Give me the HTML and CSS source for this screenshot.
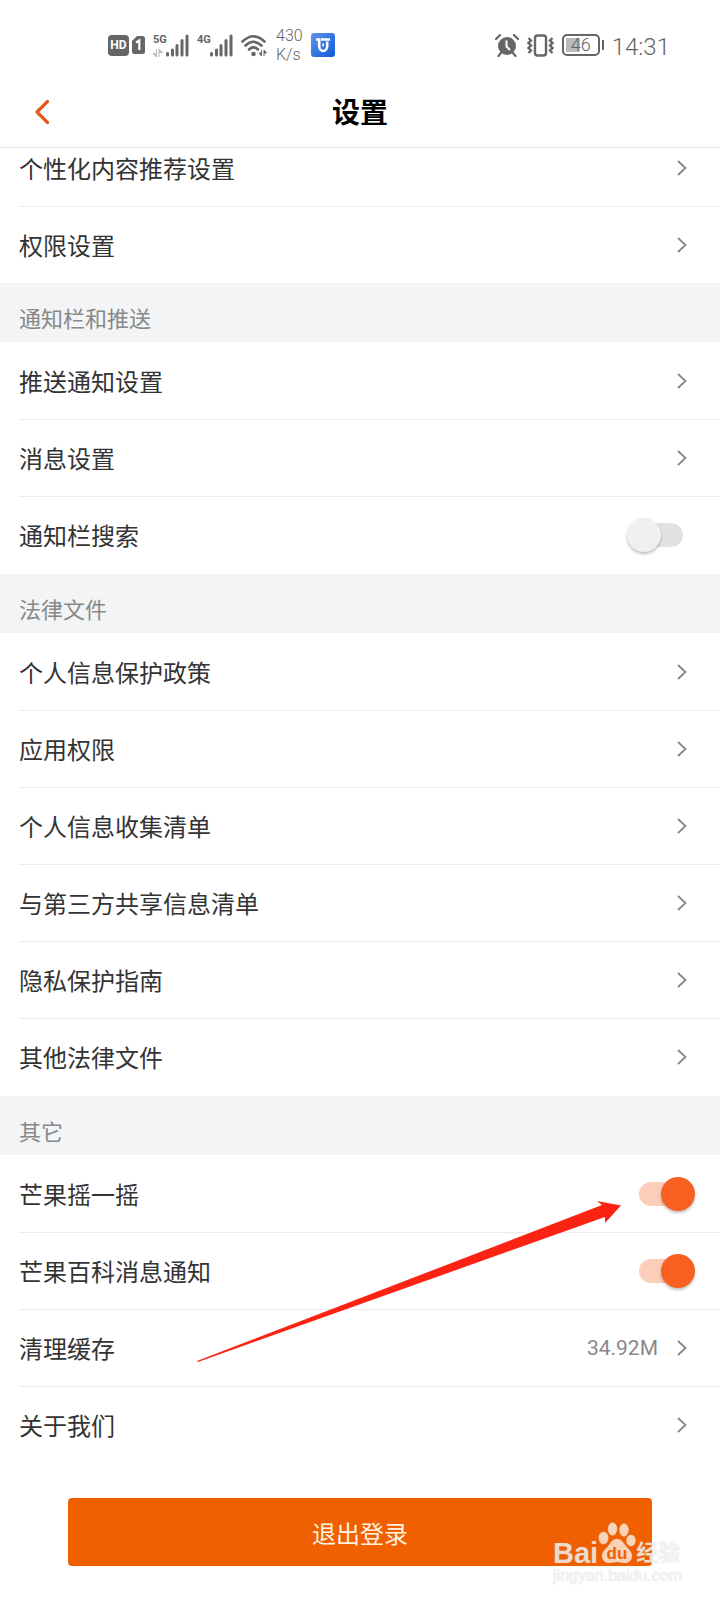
FILE: index.html
```
<!DOCTYPE html>
<html lang="zh-CN">
<head>
    <meta charset="UTF-8">
    <meta name="viewport" content="width=device-width, initial-scale=1.0">
    <title>设置</title>
    <link rel="stylesheet" href="styles.css">
</head>
<body>

    <svg width="0" height="0" class="defs">
        <symbol id="chevron" viewBox="0 0 10 16">
            <path d="M1 1l7.5 7L1 15" fill="none" stroke="currentColor" stroke-width="1.8"/>
        </symbol>
        <symbol id="bars" viewBox="0 0 24 23">
            <path d="M2.5 19.5v1.500M7.500 16v5M12 11.500v9.500M17 6.500v14.500M22 2v19" stroke="currentColor" stroke-width="3" stroke-linecap="round"/>
        </symbol>
    </svg>

    <div class="status">
        <div class="status-left">
            <span class="hd">HD</span>
            <svg class="sim" width="13" height="18" viewBox="0 0 13 18">
                <path d="M5 0h5.500a2.500 2.500 0 0 1 2.500 2.500v13a2.500 2.500 0 0 1-2.500 2.500h-8a2.500 2.500 0 0 1-2.500-2.500V5z" fill="#666"/>
                <path d="M4 6.500L7.300 4.500V14" fill="none" stroke="#fff" stroke-width="2.200"/>
            </svg>
            <div class="signal">
                <div class="net">
                    <span>5G</span>
                    <svg width="10" height="8" viewBox="0 0 10 8"><path d="M3.500 0v8L0 4.500h3.500M6 8V0l3.500 3.500H6" fill="#bbb" stroke="#bbb"/></svg>
                </div>
                <svg width="24" height="23"><use href="#bars"/></svg>
            </div>
            <div class="signal">
                <div class="net"><span>4G</span></div>
                <svg width="24" height="23"><use href="#bars"/></svg>
            </div>
            <svg class="wifi" width="27" height="23" viewBox="0 0 27 23">
                <path d="M1.500 7.500Q12.500-3 23.500 7.500M4.500 11.500Q12.500 4 20.500 11.500M8 15.500Q12.500 11 17 15.500" fill="none" stroke="#666" stroke-width="2.600" stroke-linecap="round"/>
                <circle cx="12.500" cy="20" r="2.300" fill="#666"/>
                <path d="M20.500 16v6l-2.500-3h2.500M23 22v-6l2.500 3h-2.500" fill="#666" stroke="#666"/>
            </svg>
            <div class="speed">430<br>K/s</div>
            <svg class="app" width="24" height="24" viewBox="0 0 24 24">
                <defs>
                    <linearGradient id="blue" x1="0" y1="0" x2="1" y2="1">
                        <stop offset="0" stop-color="#5b96ec"/>
                        <stop offset="1" stop-color="#1258d8"/>
                    </linearGradient>
                </defs>
                <rect width="24" height="24" rx="3" fill="url(#blue)"/>
                <path d="M5 6.500h3.200v6.500a4 5 0 0 0 8 0V8.500M10 6.500h9" fill="none" stroke="#fff" stroke-width="2.600"/>
                <path d="M12.200 10.500v3" stroke="#fff" stroke-width="1.600"/>
            </svg>
        </div>
        <div class="status-right">
            <svg width="24" height="23" viewBox="0 0 24 23">
                <circle cx="12" cy="12" r="9" fill="#666"/>
                <path d="M1 5l4-4M23 5l-4-4M6 19l-2.500 3M18 19l2.500 3" stroke="#666" stroke-width="2.200" stroke-linecap="round"/>
                <path d="M11.500 6.500V12.500l3.500 3.500" fill="none" stroke="#fff" stroke-width="2"/>
            </svg>
            <svg width="27" height="23" viewBox="0 0 27 23">
                <rect x="8" y="1.500" width="11" height="20" rx="2.500" fill="none" stroke="#666" stroke-width="2.400"/>
                <path d="M1.500 4l2.500 2.500-2.500 2.500L4 11.500l-2.500 2.500L4 16.500l-2.500 2.500M25.500 4L23 6.500l2.500 2.500-2.500 2.500 2.500 2.500-2.500 2.500 2.500 2.500" fill="none" stroke="#666" stroke-width="2.400"/>
            </svg>
            <div class="battery"><span>46</span></div>
            <div class="clock">14:31</div>
        </div>
    </div>

    <header class="header">
        <button class="back" type="button" aria-label="返回">
            <svg width="16" height="26" viewBox="0 0 16 26"><path d="M13.500 2.500L3 13l10.500 10.500" fill="none" stroke="#e2591c" stroke-width="3.200" stroke-linecap="round" stroke-linejoin="round"/></svg>
        </button>
        <h1>设置</h1>
    </header>

    <main>
        <div class="list list-scrolled">
            <a class="row" href="#"><span>个性化内容推荐设置</span><svg class="chevron"><use href="#chevron"/></svg></a>
            <a class="row" href="#"><span>权限设置</span><svg class="chevron"><use href="#chevron"/></svg></a>
        </div>

        <h2>通知栏和推送</h2>
        <div class="list">
            <a class="row" href="#"><span>推送通知设置</span><svg class="chevron"><use href="#chevron"/></svg></a>
            <a class="row" href="#"><span>消息设置</span><svg class="chevron"><use href="#chevron"/></svg></a>
            <label class="row"><span>通知栏搜索</span><input class="switch" type="checkbox"></label>
        </div>

        <h2>法律文件</h2>
        <div class="list">
            <a class="row" href="#"><span>个人信息保护政策</span><svg class="chevron"><use href="#chevron"/></svg></a>
            <a class="row" href="#"><span>应用权限</span><svg class="chevron"><use href="#chevron"/></svg></a>
            <a class="row" href="#"><span>个人信息收集清单</span><svg class="chevron"><use href="#chevron"/></svg></a>
            <a class="row" href="#"><span>与第三方共享信息清单</span><svg class="chevron"><use href="#chevron"/></svg></a>
            <a class="row" href="#"><span>隐私保护指南</span><svg class="chevron"><use href="#chevron"/></svg></a>
            <a class="row" href="#"><span>其他法律文件</span><svg class="chevron"><use href="#chevron"/></svg></a>
        </div>

        <h2>其它</h2>
        <div class="list">
            <label class="row"><span>芒果摇一摇</span><input class="switch" type="checkbox" checked></label>
            <label class="row"><span>芒果百科消息通知</span><input class="switch" type="checkbox" checked></label>
            <a class="row" href="#"><span>清理缓存</span><span class="value">34.92M</span><svg class="chevron"><use href="#chevron"/></svg></a>
            <a class="row" href="#"><span>关于我们</span><svg class="chevron"><use href="#chevron"/></svg></a>
            <!-- red pointer to the first switch -->
            <svg class="pointer" width="424" height="162" viewBox="0 0 424 162">
                <path d="M0 160L405 4L400 0L424 4.500L408 22V16L1 161z" fill="#fb2314"/>
            </svg>
        </div>
    </main>

    <footer class="footer">
        <button class="logout" type="button">退出登录</button>
        <div class="watermark">
            <div class="brand">
                <span class="bai">Bai</span>
                <svg width="38" height="42" viewBox="0 0 38 42">
                    <g fill="#fff" fill-opacity=".72" stroke="#ccc" stroke-opacity=".35" stroke-width=".6">
                        <ellipse cx="5.500" cy="16" rx="4.800" ry="6.200"/>
                        <ellipse cx="14.500" cy="7" rx="4.600" ry="6.400"/>
                        <ellipse cx="26" cy="8" rx="4.600" ry="6.400"/>
                        <ellipse cx="33" cy="18.500" rx="4.600" ry="5.800"/>
                        <path d="M19 17c4 0 6 3 8 6 3 4 7 6 7 11 0 4-3 7-7 7-3 0-5-1-8-1s-5 1-8 1c-4 0-7-3-7-7 0-5 4-7 7-11 2-3 4-6 8-6z"/>
                    </g>
                    <text x="19" y="37" text-anchor="middle" class="du">du</text>
                </svg>
                <span class="jingyan">经验</span>
            </div>
            <div class="site">jingyan.baidu.com</div>
        </div>
    </footer>

</body>
</html>
```
FILE: styles.css
```
* {
    box-sizing: border-box;
}
body {
    margin: 0;
    background: #fff;
    color: #333;
    font-family: Roboto, "Noto Sans CJK SC", sans-serif;
}
.defs {
    position: absolute;
}

/* status bar */
.status {
    display: flex;
    justify-content: space-between;
    align-items: center;
    height: 76px;
    padding: 14px 50px 0 108px;
    color: #666;
}
.status svg {
    display: block;
    flex: none;
}
.status-left,
.status-right {
    display: flex;
    align-items: center;
    gap: 8px;
}
.hd {
    width: 21px;
    height: 21px;
    margin-right: -5px;
    border-radius: 4px;
    background: #666;
    color: #fff;
    font: bold 12px/21px Roboto, sans-serif;
    text-align: center;
}
.signal {
    display: flex;
    align-items: flex-end;
}
.net {
    display: flex;
    flex-direction: column;
    justify-content: space-between;
    width: 12px;
    height: 23px;
    font-size: 11px;
    font-weight: bold;
    line-height: 12px;
}
.speed {
    font-size: 16px;
    font-weight: 300;
    line-height: 19px;
}
.battery {
    position: relative;
    width: 38px;
    height: 22px;
    margin-right: 4px;
    border: 2px solid #666;
    border-radius: 5px;
    background: linear-gradient(#bbb, #bbb) 2px 2px / 14px 14px no-repeat;
    font-size: 18px;
    font-weight: 300;
    line-height: 18px;
    text-align: center;
}
.battery::after {
    content: "";
    position: absolute;
    top: 4px;
    right: -6px;
    width: 2px;
    height: 10px;
    background: #666;
}
.clock {
    padding-top: 3px;
    font-size: 24px;
    font-weight: 300;
}

/* title bar */
.header {
    position: relative;
    z-index: 1;
    display: grid;
    grid-template-columns: 1fr auto 1fr;
    align-items: center;
    height: 72px;
    padding: 0 34px;
    border-bottom: 1px solid #e4e4e4;
    background: #fff;
}
.header h1 {
    margin: 0;
    padding-top: 4px;
    color: #000;
    font-size: 28px;
    line-height: 40px;
}
.back {
    justify-self: start;
    padding: 0;
    border: 0;
    background: none;
}
.back svg {
    display: block;
}

/* settings list */
h2 {
    height: 59px;
    margin: 0;
    padding: 21px 19px 0;
    background: #f2f4f6;
    color: #888;
    font-size: 22px;
    font-weight: normal;
    line-height: 32px;
}
.list {
    position: relative;
    padding: 0 0 1px 19px;
}
.list-scrolled {
    margin-top: -19px;
    padding-bottom: 0;
}
.row {
    display: flex;
    align-items: center;
    height: 77px;
    padding-right: 33px;
    border-top: 1px solid #ececec;
    color: #333;
    font-size: 24px;
    text-decoration: none;
}
.row:first-child {
    border-top-color: transparent;
}
.row span:first-child {
    flex: 1;
    padding-bottom: 2px;
}
.value {
    margin-right: 19px;
    color: #888;
    font-size: 21px;
}
.chevron {
    width: 10px;
    height: 16px;
    color: #888;
}
.switch {
    appearance: none;
    position: relative;
    width: 44px;
    height: 24px;
    margin: 0 4px 0 0;
    border-radius: 12px;
    background: #e2e2e2;
}
.switch::before {
    content: "";
    position: absolute;
    top: -5px;
    left: -12px;
    width: 34px;
    height: 34px;
    border-radius: 50%;
    background: #f0f0f0;
    box-shadow: 0 2px 3px rgba(0, 0, 0, 0.25);
}
.switch:checked {
    background: #fccdb9;
}
.switch:checked::before {
    left: 22px;
    background: #f86022;
}
.pointer {
    position: absolute;
    top: 46px;
    right: 99px;
    pointer-events: none;
}

/* log out */
.footer {
    position: relative;
    padding: 34px 68px;
}
.logout {
    display: block;
    width: 100%;
    height: 68px;
    border: 0;
    border-radius: 4px;
    background: #f06000;
    color: #fff3e0;
    font-family: inherit;
    font-size: 24px;
}
.watermark {
    position: absolute;
    right: 38px;
    bottom: 14px;
    color: rgba(255, 255, 255, 0.72);
    text-shadow: 0 0 1px rgba(160, 160, 160, 0.5);
}
.brand {
    display: flex;
    align-items: flex-end;
    height: 42px;
    margin-bottom: 2px;
}
.bai {
    margin-bottom: -4px;
    font: bold 29px/30px "Liberation Sans", sans-serif;
}
.du {
    fill: #f06000;
    font: bold 17px "Liberation Sans", sans-serif;
    text-shadow: none;
}
.jingyan {
    font-size: 22px;
    font-weight: bold;
    line-height: 22px;
}
.site {
    font: 16px/20px "Liberation Sans", sans-serif;
}
```
